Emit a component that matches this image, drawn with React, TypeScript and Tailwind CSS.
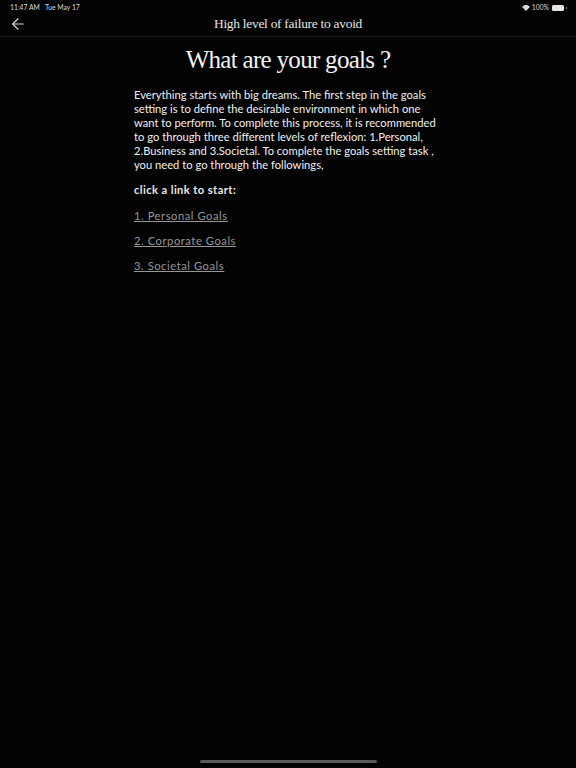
import { ArrowLeft } from "lucide-react";

const serif = "font-['Liberation_Serif',serif]";

export default function App() {
  return (
    <div className="flex flex-col h-[768px] w-[576px] overflow-hidden bg-[#030304] font-['Lato',sans-serif] text-white">
      <div className="flex h-[13px] shrink-0 items-center justify-between pl-[10px] pr-[9px] pt-[2px] text-[6.8px] text-[#d8d8d8]">
        <div className="flex gap-[5px]">
          <span>11:47 AM</span>
          <span>Tue May 17</span>
        </div>
        <div className="flex items-center gap-[2px]">
          <svg width="8" height="6" viewBox="0 0 18 14" fill="#d8d8d8">
            <path d="M9 14 L0 4.5 C5 -1.5 13 -1.5 18 4.5 Z" />
          </svg>
          <span>100%</span>
          <div className="ml-[1px] h-[6px] w-[12px] rounded-[1.5px] bg-[#e4e4e4]" />
          <div className="h-[2px] w-[1px] bg-[#888888]" />
        </div>
      </div>
      <header className="relative flex h-[24px] shrink-0 items-center justify-center border-b border-[#1a1a1a]">
        <ArrowLeft className="absolute left-[9px] top-[2px] h-[18px] w-[18px] text-[#dddddd]" strokeWidth={1.5} />
        <h2 className={`${serif} text-[13.5px] tracking-[-0.3px] text-[#e2e2e2]`}>High level of failure to avoid</h2>
      </header>
      <main className="flex flex-1 flex-col items-center">
        <h1 className={`${serif} mt-[6px] text-[25px] leading-[34px] tracking-[-0.7px] text-[#f2f2f2]`}>What are your goals ?</h1>
        <div className="mt-[11px] w-[308px] pr-[1px]">
          <p className="text-[11.2px] leading-[14px] text-[#f0f0f0]">
            Everything starts with big dreams. The first step in the goals setting is to define the desirable environment in which one want to perform. To complete this process, it is recommended to go through three different levels of reflexion: 1.Personal, 2.Business and 3.Societal. To complete the goals setting task , you need to go through the followings,
          </p>
          <p className="mt-[11px] text-[11.2px] font-bold leading-[14px] tracking-[0.4px] text-[#e8e8e8]">click a link to start:</p>
          <div className="mt-[12px] flex flex-col gap-[10.5px] text-[11.2px] leading-[14.5px] tracking-[0.55px] text-[#969696] underline">
            <a href="#">1. Personal Goals</a>
            <a href="#">2. Corporate Goals</a>
            <a href="#">3. Societal Goals</a>
          </div>
        </div>
      </main>
      <div className="flex h-[8px] shrink-0 justify-center">
        <div className="h-[3px] w-[177px] rounded-full bg-[#5a5a5a]" />
      </div>
    </div>
  );
}
